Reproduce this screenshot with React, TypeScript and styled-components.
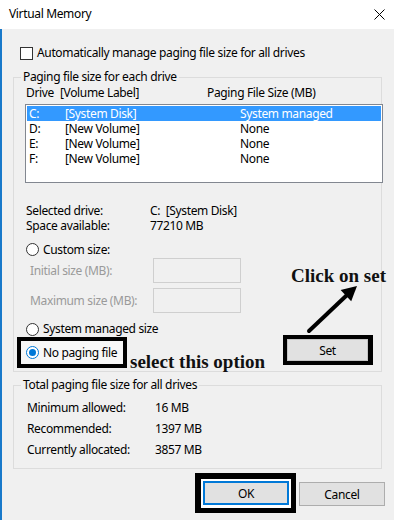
import React from 'react'
import styled, { createGlobalStyle } from 'styled-components'

const GlobalStyle = createGlobalStyle`
  html, body {
    margin: 0;
    padding: 0;
    background: #f0f0f0;
  }
  body {
    font-family: 'Noto Sans', 'Open Sans', sans-serif;
    font-size: 12px;
    letter-spacing: -0.35px;
    color: #000;
  }
  * {
    box-sizing: border-box;
  }
`

const Window = styled.div`
  position: relative;
  width: 394px;
  height: 520px;
  background: #f0f0f0;
  overflow: hidden;
  display: flex;
  flex-direction: column;
`

const TitleBar = styled.div`
  flex: none;
  height: 29px;
  background: #fff;
  display: flex;
  align-items: center;
  justify-content: space-between;
  padding: 0 9px 1px 9px;
`

const Title = styled.div`
  line-height: 16px;
`

const Body = styled.div`
  flex: 1;
  border-left: 2px solid #1979ca;
  padding: 16px 0 0 11px;
  display: flex;
  flex-direction: column;
`

const Row = styled.div<{ indent?: number; top?: number; h?: number }>`
  display: flex;
  align-items: center;
  height: ${(p) => p.h ?? 16}px;
  line-height: ${(p) => p.h ?? 16}px;
  margin-left: ${(p) => p.indent ?? 0}px;
  margin-top: ${(p) => p.top ?? 0}px;
  white-space: nowrap;
`

const CheckBox = styled.span`
  display: inline-block;
  width: 13px;
  height: 13px;
  border: 1px solid #333;
  background: #fff;
  margin-right: 4px;
`

const Radio = styled.span<{ checked?: boolean }>`
  display: inline-flex;
  align-items: center;
  justify-content: center;
  width: 13px;
  height: 13px;
  border-radius: 50%;
  border: 1px solid ${(p) => (p.checked ? '#0078d7' : '#333')};
  background: #fff;
  margin-right: 4px;
  &::after {
    content: '';
    width: 7px;
    height: 7px;
    border-radius: 50%;
    background: ${(p) => (p.checked ? '#0078d7' : 'transparent')};
  }
`

const Group = styled.fieldset<{ top: number; pad: string }>`
  margin: ${(p) => p.top}px 0 0 0;
  padding: ${(p) => p.pad};
  width: 369px;
  min-width: 0;
  border: 1px solid #dcdcdc;
`

const Legend = styled.legend<{ shift: number }>`
  margin-left: ${(p) => p.shift}px;
  padding: 0 2px;
  line-height: 16px;
`

const ListHeader = styled.div`
  display: grid;
  grid-template-columns: 34px 147px 1fr;
  height: 16px;
  line-height: 16px;
`

const DriveList = styled.div`
  margin: 3px 0 0 -1px;
  width: 358px;
  height: 79px;
  border: 1px solid #828790;
  background: #fff;
  padding: 1px;
`

const DriveRow = styled.div<{ selected?: boolean }>`
  display: grid;
  grid-template-columns: 36px 175px 1fr;
  height: 15px;
  line-height: 15px;
  padding-left: 2px;
  background: ${(p) => (p.selected ? '#3399ff' : 'transparent')};
  color: ${(p) => (p.selected ? '#fff' : '#000')};
`

const InfoGrid = styled.div<{ col: number; rowH: number; top: number }>`
  display: grid;
  grid-template-columns: ${(p) => p.col}px 1fr;
  grid-auto-rows: ${(p) => p.rowH}px;
  line-height: ${(p) => p.rowH}px;
  align-items: center;
  margin-top: ${(p) => p.top}px;
`

const SizeRow = styled.div<{ top: number }>`
  display: grid;
  grid-template-columns: 123px 88px;
  align-items: center;
  margin: ${(p) => p.top}px 0 0 4px;
  color: #9a9a9a;
`

const SizeInput = styled.div`
  height: 25px;
  border: 1px solid #cfcfcf;
  background: #f0f0f0;
`

const BottomRow = styled.div`
  display: flex;
  align-items: flex-start;
  margin-left: -9px;
  width: 356px;
`

const Highlight = styled.div`
  display: flex;
  align-items: center;
  width: 110px;
  height: 31px;
  border: 4px solid #000;
  background: #f7f7f7;
  padding-left: 5px;
  white-space: nowrap;
`

const Note = styled.div`
  font-family: 'Liberation Serif', serif;
  font-weight: bold;
  font-size: 19px;
  line-height: 18px;
  letter-spacing: 0;
  color: #111;
  white-space: nowrap;
`

const NoteInline = styled(Note)`
  align-self: flex-end;
  margin: 0 0 -3px 3px;
`

const SetFrame = styled.div`
  margin: -2px 0 0 auto;
  width: 90px;
  height: 30px;
  border: 4px solid #000;
  border-right-width: 5px;
  display: flex;
`

const Button = styled.div<{ focused?: boolean }>`
  display: flex;
  align-items: center;
  justify-content: center;
  background: #e1e1e1;
  border: ${(p) => (p.focused ? '2px solid #0078d7' : '1px solid #adadad')};
`

const SetButton = styled(Button)`
  flex: 1;
  border-color: #c4c4c4;
`

const Buttons = styled.div`
  display: flex;
  justify-content: flex-end;
  align-items: flex-start;
  gap: 3px;
  margin-top: 4px;
  padding-right: 9px;
`

const OkFrame = styled.div`
  width: 101px;
  height: 40px;
  border: 5px solid #000;
  border-left-width: 6px;
  border-top-width: 6px;
  padding: 2px 1px 2px 2px;
  background: #fff;
  display: flex;
`

const OkButton = styled(Button)`
  width: 86px;
  height: 24px;
`

const CancelButton = styled(Button)`
  width: 86px;
  height: 24px;
  margin-top: 9px;
`

const Callout = styled(Note)`
  position: absolute;
  left: 291px;
  top: 267px;
`

const Arrow = styled.svg`
  position: absolute;
  left: 0;
  top: 0;
  pointer-events: none;
`

const drives = [
  { letter: 'C:', label: '[System Disk]', size: 'System managed', selected: true },
  { letter: 'D:', label: '[New Volume]', size: 'None' },
  { letter: 'E:', label: '[New Volume]', size: 'None' },
  { letter: 'F:', label: '[New Volume]', size: 'None' },
]

const totals = [
  ['Minimum allowed:', '16 MB'],
  ['Recommended:', '1397 MB'],
  ['Currently allocated:', '3857 MB'],
]

const App = () => {
  return (
    <>
      <GlobalStyle />
      <Window>
        <TitleBar>
          <Title>Virtual Memory</Title>
          <svg width='11' height='11' viewBox='0 0 11 11'>
            <path d='M0.5 0.5 L10.5 10.5 M10.5 0.5 L0.5 10.5' stroke='#000' strokeWidth='1' />
          </svg>
        </TitleBar>
        <Body>
          <Row indent={7}>
            <CheckBox />
            Automatically manage paging file size for all drives
          </Row>

          <Group top={8} pad='0 0 3px 12px'>
            <Legend shift={-5}>Paging file size for each drive</Legend>
            <ListHeader>
              <span>Drive</span>
              <span>[Volume Label]</span>
              <span>Paging File Size (MB)</span>
            </ListHeader>
            <DriveList>
              {drives.map((d) => (
                <DriveRow key={d.letter} selected={d.selected}>
                  <span>{d.letter}</span>
                  <span>{d.label}</span>
                  <span>{d.size}</span>
                </DriveRow>
              ))}
            </DriveList>

            <InfoGrid col={124} rowH={15} top={20}>
              <span>Selected drive:</span>
              <span>C:&nbsp; [System Disk]</span>
              <span>Space available:</span>
              <span>77210 MB</span>
            </InfoGrid>

            <Row top={9} h={15}>
              <Radio />
              Custom size:
            </Row>
            <SizeRow top={1}>
              <span>Initial size (MB):</span>
              <SizeInput />
            </SizeRow>
            <SizeRow top={5}>
              <span>Maximum size (MB):</span>
              <SizeInput />
            </SizeRow>

            <Row top={8}>
              <Radio />
              System managed size
            </Row>

            <BottomRow>
              <Highlight>
                <Radio checked />
                No paging file
              </Highlight>
              <NoteInline>select this option</NoteInline>
              <SetFrame>
                <SetButton>Set</SetButton>
              </SetFrame>
            </BottomRow>
          </Group>

          <Group top={5} pad='4px 0 8px 13px'>
            <Legend shift={-6}>Total paging file size for all drives</Legend>
            <InfoGrid col={128} rowH={21} top={0}>
              {totals.map(([k, v]) => (
                <React.Fragment key={k}>
                  <span>{k}</span>
                  <span>{v}</span>
                </React.Fragment>
              ))}
            </InfoGrid>
          </Group>

          <Buttons>
            <OkFrame>
              <OkButton focused>OK</OkButton>
            </OkFrame>
            <CancelButton>Cancel</CancelButton>
          </Buttons>
        </Body>

        <Callout>Click on set</Callout>
        <Arrow width='394' height='520' viewBox='0 0 394 520'>
          <line x1='309' y1='331' x2='347' y2='295' stroke='#000' strokeWidth='4' strokeLinecap='round' />
          <polygon points='357,286 340.6,290.1 351.2,301.3' fill='#000' />
        </Arrow>
      </Window>
    </>
  )
}

export default App
